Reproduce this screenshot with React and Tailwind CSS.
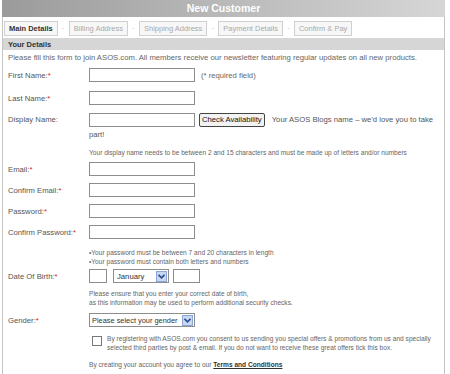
import React from "react";

const tabs = ["Main Details", "Billing Address", "Shipping Address", "Payment Details", "Confirm & Pay"];

const Req = () => <span className="text-[#d22]">*</span>;

const Row = ({ label, req, children, className = "" }) => (
    <div className={"flex items-center " + className}>
        <div className="w-[81px] shrink-0 text-[#555]">
            {label}:{req && <Req />}
        </div>
        {children}
    </div>
);

const Input = ({ w = "w-[106px]" }) => (
    <div className={"h-[14px] border border-[#8d8d8d] bg-white " + w} />
);

const Arrow = () => (
    <div className="w-[11px] h-[11px] bg-[#c9d8f2] border border-[#8aa6d6] flex items-center justify-center shrink-0">
        <svg width="7" height="5" viewBox="0 0 7 5">
            <path d="M0.5 0.8 L3.5 3.8 L6.5 0.8" fill="none" stroke="#2b4a8c" strokeWidth="1.6" />
        </svg>
    </div>
);

export default function App() {
    return (
        <div className="w-[450px] h-[374px] overflow-hidden bg-white text-[7.7px] leading-[11px] text-[#555] pl-[2px] pr-[5px]" style={{ fontFamily: "'Liberation Sans', Arial, sans-serif" }}>
            <div className="h-[17px] bg-gradient-to-r from-[#9b9b9b] via-[#b9b9b9] to-[#d6d6d6] flex items-center justify-center text-white font-bold text-[10.5px]">
                New Customer
            </div>
            <div className="border-l border-r border-[#c4c4c4] h-[400px]">
                <div className="flex items-center pl-[1px] pt-[4px] pb-[2px] text-[7.5px]">
                    {tabs.map((t, i) => (
                        <React.Fragment key={t}>
                            {i > 0 && <span className="w-[11px] text-center text-[#c8c8c8] text-[7px] -mt-[3px]">-</span>}
                            <div className={"h-[15px] px-[4px] border border-[#d0d0d0] bg-[#f7f7f7] flex items-center " + (i === 0 ? "font-bold text-[#333]" : "text-[#a9a9a9]")}>
                                {t}
                            </div>
                        </React.Fragment>
                    ))}
                </div>
                <div className="h-[12px] bg-[#d6d6d6] flex items-center pl-[5px] font-bold text-[#333] text-[7.5px]">Your Details</div>
                <div className="pl-[5px] pt-[2px]">
                    <p className="text-[#666]">Please fill this form to join ASOS.com. All members receive our newsletter featuring regular updates on all new products.</p>
                    <Row label="First Name" req className="mt-[5px]">
                        <Input />
                        <span className="ml-[6px] text-[#666]">(* required field)</span>
                    </Row>
                    <Row label="Last Name" req className="mt-[9px]">
                        <Input />
                    </Row>
                    <div className="flex mt-[8px]">
                        <div className="w-[81px] shrink-0 pt-[1px]">Display Name:</div>
                        <div className="w-[352px] leading-[15px] -mt-[1px]">
                            <span className="inline-block align-middle h-[14px] w-[106px] border border-[#8d8d8d]" />
                            <span className="inline-flex items-center align-middle ml-[4px] h-[14px] px-[2px] border border-[#444] rounded-[2px] bg-[#f3f3f3] text-[#111]">Check Availability</span>
                            <span className="ml-[7px] text-[#555]">Your ASOS Blogs name – we'd love you to take part!</span>
                        </div>
                    </div>
                    <p className="ml-[81px] mt-[5px] text-[6.6px] text-[#666]">Your display name needs to be between 2 and 15 characters and must be made up of letters and/or numbers</p>
                    <Row label="Email" req className="mt-[4px]">
                        <Input />
                    </Row>
                    <Row label="Confirm Email" req className="mt-[7px]">
                        <Input />
                    </Row>
                    <Row label="Password" req className="mt-[7px]">
                        <Input />
                    </Row>
                    <Row label="Confirm Password" req className="mt-[7px]">
                        <Input />
                    </Row>
                    <div className="ml-[81px] mt-[9px] text-[6.6px] text-[#666] leading-[9px]">
                        <p>•Your password must be between 7 and 20 characters in length</p>
                        <p>•Your password must contain both letters and numbers</p>
                    </div>
                    <Row label="Date Of Birth" req className="mt-[3px]">
                        <Input w="w-[18px]" />
                        <div className="ml-[6px] h-[14px] w-[56px] border border-[#8d8d8d] flex items-center justify-between pl-[3px] pr-[1px] text-[#333]">
                            January
                            <Arrow />
                        </div>
                        <div className="ml-[4px]"><Input w="w-[27px]" /></div>
                    </Row>
                    <div className="ml-[81px] mt-[6px] text-[6.6px] text-[#666] leading-[9px]">
                        <p>Please ensure that you enter your correct date of birth,</p>
                        <p>as this information may be used to perform additional security checks.</p>
                    </div>
                    <Row label="Gender" req className="mt-[6px]">
                        <div className="h-[14px] w-[106px] border border-[#8d8d8d] flex items-center justify-between pl-[2px] pr-[1px] text-[#333] text-[7.4px] whitespace-nowrap">
                            Please select your gender
                            <Arrow />
                        </div>
                    </Row>
                    <div className="flex ml-[84px] mt-[7px]">
                        <div className="w-[10px] h-[10px] border border-[#777] bg-white shrink-0 mt-[2px]" />
                        <div className="ml-[5px] text-[6.6px] text-[#666] leading-[9px] whitespace-nowrap">
                            <p>By registering with ASOS.com you consent to us sending you special offers &amp; promotions from us and specially</p>
                            <p>selected third parties by post &amp; email. If you do not want to receive these great offers tick this box.</p>
                        </div>
                    </div>
                    <p className="ml-[81px] mt-[7px] text-[6.6px] text-[#666]">
                        By creating your account you agree to our <span className="font-bold underline text-[#333]">Terms and Conditions</span>
                    </p>
                </div>
            </div>
        </div>
    );
}
